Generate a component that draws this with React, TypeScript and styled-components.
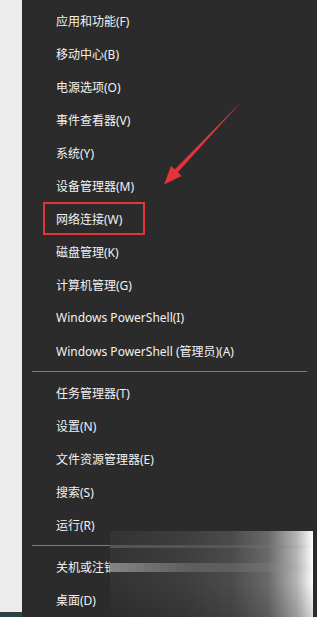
import React from "react";
import styled, { createGlobalStyle } from "styled-components";

const Global = createGlobalStyle`
  html, body { margin: 0; padding: 0; background: #2b2b2b; }
  body { font-family: "Noto Sans", "Noto Sans CJK SC", sans-serif; }
`;

const Page = styled.div`
  position: relative;
  display: flex;
  width: 317px;
  height: 617px;
  overflow: hidden;
`;

const Desktop = styled.div`
  width: 22px;
  flex: none;
  background: #ececec;
  display: flex;
  flex-direction: column;
  justify-content: flex-end;
`;

const Taskbar = styled.div`
  height: 5px;
  background: #2e4147;
`;

const Menu = styled.nav`
  flex: 1;
  background: #2b2b2b;
  padding-top: 4px;
  display: flex;
  flex-direction: column;
`;

const Item = styled.div`
  position: relative;
  height: 33px;
  display: flex;
  align-items: center;
  padding-left: 34px;
  color: #f2f2f2;
  font-size: 12px;
  font-family: "Noto Sans", "Noto Sans CJK SC", sans-serif;
  white-space: nowrap;
`;

const Highlight = styled.span`
  position: absolute;
  left: 21px;
  top: 0;
  width: 102px;
  height: 33px;
  box-sizing: border-box;
  border: 2px solid #e5343b;
`;

const Separator = styled.hr`
  margin: 4px 10px 4px 10px;
  border: none;
  height: 1px;
  background: #7c7c7c;
`;

const Arrow = styled.svg`
  position: absolute;
  left: 0;
  top: 0;
  pointer-events: none;
`;

const Blur = styled.div`
  position: absolute;
  left: 110px;
  top: 531px;
  width: 203px;
  bottom: 0;
  background:
    linear-gradient(to right, rgba(200,200,200,0.55), rgba(150,150,150,0.35) 40%, rgba(150,150,150,0.15) 85%, rgba(255,255,255,0) 100%) 0 32px / 100% 9px no-repeat,
    linear-gradient(to right, rgba(120,120,120,0.5), rgba(120,120,120,0.25) 80%, rgba(255,255,255,0)) 0 14px / 100% 3px no-repeat,
    linear-gradient(to bottom, rgba(0,0,0,0) 60%, rgba(0,0,0,0.15) 100%),
    linear-gradient(to right, #333333 0%, #3d3d3d 35%, #4b4b4b 60%, #6a6a6a 78%, #b5b5b5 92%, #f4f4f4 99%, #ffffff 100%);
`;

const group1 = [
  "应用和功能(F)",
  "移动中心(B)",
  "电源选项(O)",
  "事件查看器(V)",
  "系统(Y)",
  "设备管理器(M)",
  "网络连接(W)",
  "磁盘管理(K)",
  "计算机管理(G)",
  "Windows PowerShell(I)",
  "Windows PowerShell (管理员)(A)",
];
const group2 = ["任务管理器(T)", "设置(N)", "文件资源管理器(E)", "搜索(S)", "运行(R)"];
const group3 = ["关机或注销(U)", "桌面(D)"];

export default function App() {
  return (
    <Page>
      <Global />
      <Desktop>
        <Taskbar />
      </Desktop>
      <Menu>
        {group1.map((t) => (
          <Item key={t}>
            {t === "网络连接(W)" && <Highlight />}
            {t}
          </Item>
        ))}
        <Separator />
        {group2.map((t) => (
          <Item key={t}>{t}</Item>
        ))}
        <Separator />
        {group3.map((t) => (
          <Item key={t}>{t}</Item>
        ))}
      </Menu>
      <Arrow width="317" height="617" viewBox="0 0 317 617">
        <polygon
          points="239.5,103.5 238.9,104.5 177.8,172.3 181.6,175.9 164,184.5 171,166 174.8,169.5"
          fill="#e8323a"
        />
      </Arrow>
      <Blur />
    </Page>
  );
}
